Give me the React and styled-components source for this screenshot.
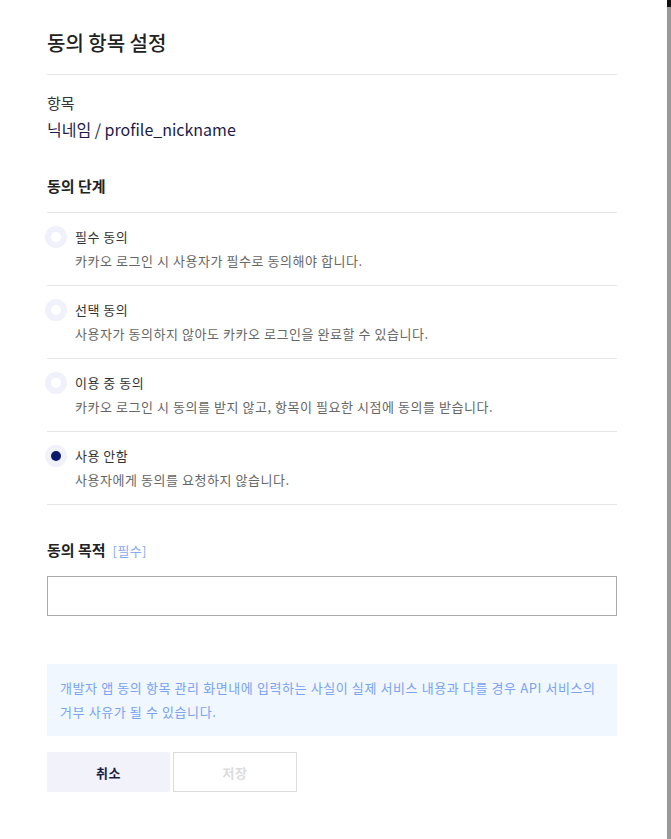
import React, { useState } from 'react'
import styled, { createGlobalStyle } from 'styled-components'

const GlobalStyle = createGlobalStyle`
  html, body {
    margin: 0;
    padding: 0;
    background: #fff;
  }
  body {
    font-family: "Noto Sans CJK KR", "Noto Sans", sans-serif;
    color: #222;
  }
  * { box-sizing: border-box; }
`

const Frame = styled.div`
  display: flex;
  width: 671px;
  height: 839px;
  overflow: hidden;
`

const Dialog = styled.div`
  flex: 1;
  padding: 0 50px 0 47px;
`

const ScrollStrip = styled.div`
  width: 4px;
  display: flex;
  flex-direction: column;
  background: #999;
`

const StripTop = styled.div`
  height: 7px;
  background: #111;
`

const Header = styled.h1`
  margin: 0;
  padding: 29px 0 17px;
  font-size: 20px;
  line-height: 28px;
  font-weight: 500;
  color: #222;
  border-bottom: 1px solid #e6e6e6;
`

const FieldLabel = styled.div`
  margin-top: 17px;
  font-size: 15px;
  line-height: 22px;
  color: #333;
`

const FieldValue = styled.div`
  margin-top: 3px;
  font-size: 16px;
  line-height: 24px;
  color: #1c1c4a;
`

const SectionTitle = styled.h2`
  margin: ${p => p.$top}px 0 0;
  font-size: 15px;
  line-height: 22px;
  font-weight: 700;
  color: #222;
  display: flex;
  align-items: baseline;
  gap: 7px;
`

const Required = styled.span`
  font-size: 13px;
  font-weight: 400;
  letter-spacing: 0.4px;
  color: #8aaaf2;
`

const OptionList = styled.div`
  margin-top: 15px;
  border-top: 1px solid #e6e6e6;
`

const Option = styled.label`
  display: grid;
  grid-template-columns: 28px 1fr;
  padding: 14px 0 14px;
  border-bottom: 1px solid #e6e6e6;
  cursor: pointer;
`

const Radio = styled.span`
  width: 22px;
  height: 22px;
  margin: -1px 0 0 -2px;
  border-radius: 50%;
  background: #f0f1fa;
  display: flex;
  align-items: center;
  justify-content: center;

  &::after {
    content: '';
    width: 10px;
    height: 10px;
    border-radius: 50%;
    background: ${p => (p.$checked ? '#0c1a6b' : '#fff')};
  }
`

const OptionText = styled.div`
  display: flex;
  flex-direction: column;
  gap: 4px;
`

const OptionTitle = styled.span`
  font-size: 13px;
  line-height: 20px;
  letter-spacing: 0.5px;
  color: #333;
`

const OptionDesc = styled.span`
  font-size: 13px;
  line-height: 20px;
  letter-spacing: 0.55px;
  color: #666;
`

const Input = styled.input`
  display: block;
  width: 100%;
  height: 40px;
  margin-top: 14px;
  border: 1px solid #aaa;
  padding: 0 12px;
  font-family: inherit;
  font-size: 14px;
  outline: none;
`

const Notice = styled.p`
  margin: 48px 0 0;
  padding: 12px 8px 12px 13px;
  background: #f0f7ff;
  font-size: 13px;
  line-height: 24px;
  letter-spacing: 0.6px;
  color: #7aa3f2;
`

const Buttons = styled.div`
  display: flex;
  gap: 3px;
  margin-top: 16px;
`

const Button = styled.button`
  width: ${p => (p.$primary ? 124 : 123)}px;
  height: 40px;
  font-family: inherit;
  font-size: 13px;
  font-weight: 700;
  letter-spacing: 0.5px;
  border: 1px solid ${p => (p.$primary ? '#dcdcdc' : '#f2f2fa')};
  background: ${p => (p.$primary ? '#fff' : '#f2f2fa')};
  color: ${p => (p.$primary ? '#dcdcdc' : '#1c1c4a')};
  cursor: pointer;
`

const options = [
  { title: '필수 동의', desc: '카카오 로그인 시 사용자가 필수로 동의해야 합니다.' },
  { title: '선택 동의', desc: '사용자가 동의하지 않아도 카카오 로그인을 완료할 수 있습니다.' },
  { title: '이용 중 동의', desc: '카카오 로그인 시 동의를 받지 않고, 항목이 필요한 시점에 동의를 받습니다.' },
  { title: '사용 안함', desc: '사용자에게 동의를 요청하지 않습니다.' },
]

export default function App() {
  const [selected, setSelected] = useState(3)

  return (
    <Frame>
      <GlobalStyle />
      <Dialog>
        <Header>동의 항목 설정</Header>
        <FieldLabel>항목</FieldLabel>
        <FieldValue>닉네임 / profile_nickname</FieldValue>

        <SectionTitle $top={34}>동의 단계</SectionTitle>
        <OptionList>
          {options.map((o, i) => (
            <Option key={o.title} onClick={() => setSelected(i)}>
              <Radio $checked={selected === i} />
              <OptionText>
                <OptionTitle>{o.title}</OptionTitle>
                <OptionDesc>{o.desc}</OptionDesc>
              </OptionText>
            </Option>
          ))}
        </OptionList>

        <SectionTitle $top={34}>
          동의 목적 <Required>[필수]</Required>
        </SectionTitle>
        <Input />

        <Notice>
          개발자 앱 동의 항목 관리 화면내에 입력하는 사실이 실제 서비스 내용과 다를 경우 API 서비스의
          거부 사유가 될 수 있습니다.
        </Notice>

        <Buttons>
          <Button>취소</Button>
          <Button $primary>저장</Button>
        </Buttons>
      </Dialog>
      <ScrollStrip>
        <StripTop />
      </ScrollStrip>
    </Frame>
  )
}
